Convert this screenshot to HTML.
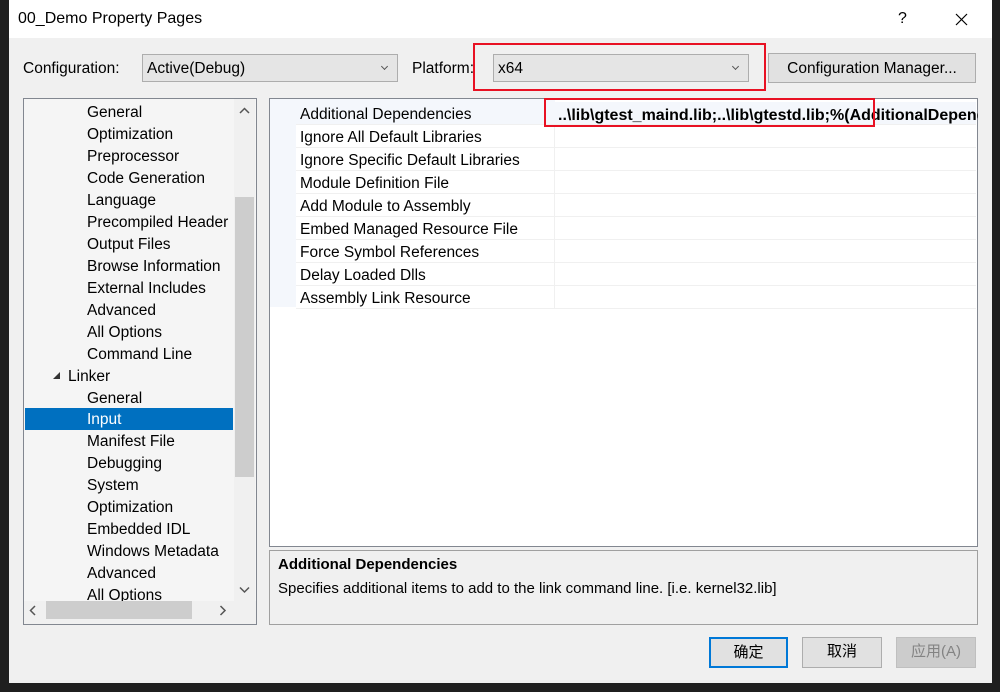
<!DOCTYPE html>
<html><head><meta charset="utf-8"><style>
*{margin:0;padding:0;box-sizing:border-box}
body{width:1000px;height:692px;background:#1f1f1f;position:relative;overflow:hidden;font-family:"Segoe UI","Liberation Sans","Noto Sans CJK SC",sans-serif;font-size:15px;color:#000}
.a{position:absolute}
.dlg{left:9px;top:0;width:983px;height:683px;background:#f0f0f0}
.title{left:9px;top:0;width:983px;height:38px;background:#fff}
.combo{background:#e5e5e5;border:1px solid #adadad;height:28px;line-height:28px;padding-left:4px;font-size:15.5px}
.chev{position:absolute;right:10px;top:9px;width:5px;height:5px;border-right:1px solid #555;border-bottom:1px solid #555;transform:rotate(45deg)}
.tree{left:23px;top:98px;width:234px;height:527px;border:1px solid #828790;background:#f5f5f5}
.ti{position:absolute;left:63px;height:22px;line-height:24px;font-size:15.5px;white-space:nowrap;width:145px;overflow:hidden}
.grid{left:269px;top:98px;width:709px;height:449px;border:1px solid #828790;background:#fff}
.row{position:absolute;left:26px;width:680px;height:23px;border-bottom:1px solid #f0f0f0;}
.row span{position:absolute;left:4px;line-height:25px;font-size:15.5px;white-space:nowrap}
.btn{height:30px;border:1px solid #adadad;background:#e1e1e1;text-align:center;line-height:28px;font-size:15px}
</style></head><body>
<div class="a dlg"></div>
<div class="a title"></div>
<div class="a" style="left:18px;top:10px;font-size:16px">00_Demo Property Pages</div>
<div class="a" style="left:898px;top:10px;font-size:16px">?</div>
<svg class="a" style="left:955px;top:13px" width="13" height="13"><path d="M1 1L12 12M12 1L1 12" stroke="#000" stroke-width="1.2"/></svg>

<div class="a" style="left:23px;top:60px;font-size:15.5px">Configuration:</div>
<div class="a combo" style="left:142px;top:54px;width:256px">Active(Debug)<div class="chev"></div></div>
<div class="a" style="left:412px;top:60px;font-size:15.5px">Platform:</div>
<div class="a combo" style="left:493px;top:54px;width:256px">x64<div class="chev"></div></div>
<div class="a" style="left:473px;top:43px;width:293px;height:48px;border:2px solid #e81123"></div>
<div class="a btn" style="left:768px;top:53px;width:208px;height:30px;font-size:15.5px;line-height:29px">Configuration Manager...</div>

<div class="a tree">
<div class="ti" style="top:2px">General</div>
<div class="ti" style="top:24px">Optimization</div>
<div class="ti" style="top:46px">Preprocessor</div>
<div class="ti" style="top:68px">Code Generation</div>
<div class="ti" style="top:90px">Language</div>
<div class="ti" style="top:112px">Precompiled Header</div>
<div class="ti" style="top:134px">Output Files</div>
<div class="ti" style="top:156px">Browse Information</div>
<div class="ti" style="top:178px">External Includes</div>
<div class="ti" style="top:200px">Advanced</div>
<div class="ti" style="top:222px">All Options</div>
<div class="ti" style="top:244px">Command Line</div>
<svg class="a" style="left:29px;top:273px" width="8" height="8"><path d="M7 0L7 7L0 7Z" fill="#333"/></svg>
<div class="ti" style="top:266px;left:44px">Linker</div>
<div class="ti" style="top:288px">General</div>
<div class="a" style="left:1px;top:309px;width:208px;height:22px;background:#0070c0"></div>
<div class="ti" style="top:309px;color:#fff">Input</div>
<div class="ti" style="top:331px">Manifest File</div>
<div class="ti" style="top:353px">Debugging</div>
<div class="ti" style="top:375px">System</div>
<div class="ti" style="top:397px">Optimization</div>
<div class="ti" style="top:419px">Embedded IDL</div>
<div class="ti" style="top:441px">Windows Metadata</div>
<div class="ti" style="top:463px">Advanced</div>
<div class="ti" style="top:485px;height:17px">All Options</div>
<div class="a" style="left:210px;top:0;width:21px;height:502px;background:#f0f0f0"></div>
<div class="a" style="left:211px;top:98px;width:19px;height:280px;background:#cdcdcd"></div>
<svg class="a" style="left:215px;top:8px" width="12" height="8"><path d="M1 6L5.5 1.5L10 6" stroke="#555" fill="none" stroke-width="1.5"/></svg>
<svg class="a" style="left:215px;top:487px" width="12" height="8"><path d="M1 1.5L5.5 6L10 1.5" stroke="#555" fill="none" stroke-width="1.5"/></svg>
<div class="a" style="left:0;top:502px;width:232px;height:23px;background:#f0f0f0"></div>
<div class="a" style="left:22px;top:502px;width:146px;height:18px;background:#cdcdcd"></div>
<svg class="a" style="left:5px;top:506px" width="8" height="12"><path d="M6 1L1.5 5.5L6 10" stroke="#555" fill="none" stroke-width="1.5"/></svg>
<svg class="a" style="left:195px;top:506px" width="8" height="12"><path d="M1.5 1L6 5.5L1.5 10" stroke="#555" fill="none" stroke-width="1.5"/></svg>
</div>

<div class="a grid">
<div class="a" style="left:0;top:0;width:26px;height:208px;background:#f4f7fc"></div>
<div class="a" style="left:0;top:0;width:285px;height:26px;background:#f4f7fc"></div>
<div class="row" style="top:3px;background:#f4f7fc"><span>Additional Dependencies</span></div>
<div class="row" style="top:26px"><span>Ignore All Default Libraries</span></div>
<div class="row" style="top:49px"><span>Ignore Specific Default Libraries</span></div>
<div class="row" style="top:72px"><span>Module Definition File</span></div>
<div class="row" style="top:95px"><span>Add Module to Assembly</span></div>
<div class="row" style="top:118px"><span>Embed Managed Resource File</span></div>
<div class="row" style="top:141px"><span>Force Symbol References</span></div>
<div class="row" style="top:164px"><span>Delay Loaded Dlls</span></div>
<div class="row" style="top:187px"><span>Assembly Link Resource</span></div>
<div class="a" style="left:284px;top:26px;width:1px;height:184px;background:#f0f0f0"></div>
<div class="a" style="left:288px;top:5px;width:420px;overflow:hidden;white-space:nowrap;font-weight:bold;font-size:16px;line-height:23px">..\lib\gtest_maind.lib;..\lib\gtestd.lib;%(AdditionalDependencies)</div>
</div>
<div class="a" style="left:544px;top:98px;width:331px;height:29px;border:2px solid #e81123"></div>

<div class="a" style="left:269px;top:550px;width:709px;height:75px;border:1px solid #a0a0a0;background:#f0f0f0"></div>
<div class="a" style="left:278px;top:556px;font-weight:bold;font-size:15px">Additional Dependencies</div>
<div class="a" style="left:278px;top:580px;font-size:15px">Specifies additional items to add to the link command line. [i.e. kernel32.lib]</div>

<div class="a btn" style="left:709px;top:637px;width:79px;height:31px;border:2px solid #0078d7">确定</div>
<div class="a btn" style="left:802px;top:637px;width:80px;height:31px">取消</div>
<div class="a btn" style="left:896px;top:637px;width:80px;height:31px;background:#cccccc;border-color:#bfbfbf;color:#838383">应用(A)</div>
</body></html>
